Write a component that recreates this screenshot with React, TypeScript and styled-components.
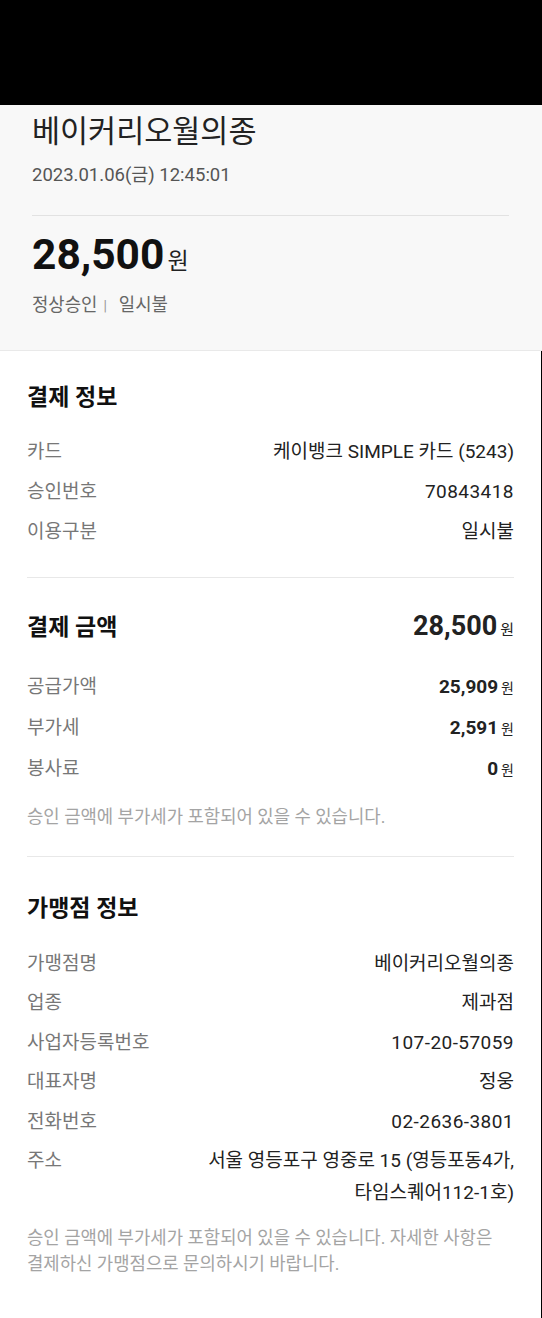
import React from 'react';
import styled, { createGlobalStyle } from 'styled-components';

const GlobalStyle = createGlobalStyle`
  html, body {
    margin: 0;
    padding: 0;
    background: #ffffff;
  }
  body {
    font-family: 'Roboto', 'Noto Sans CJK KR', sans-serif;
    color: #222;
  }
`;

const Page = styled.div`
  width: 542px;
  min-height: 1318px;
  background: #ffffff;
  display: flex;
  flex-direction: column;
`;

const StatusBar = styled.div`
  height: 105px;
  background: #000000;
`;

const Header = styled.header`
  background: #f8f8f8;
  padding: 10px 33px 33px 32px;
  border-bottom: 1px solid #e9e9e9;
  display: flex;
  flex-direction: column;
`;

const StoreName = styled.h1`
  margin: 0;
  font-size: 30.5px;
  line-height: 34px;
  font-weight: 400;
  color: #222;
`;

const DateText = styled.div`
  margin-top: 14px;
  font-size: 18.5px;
  line-height: 24px;
  color: #555;
`;

const HeaderDivider = styled.hr`
  margin: 28px 0 0;
  border: none;
  border-top: 1px solid #e2e2e2;
`;

const BigAmount = styled.div`
  margin-top: 15px;
  height: 48px;
  line-height: 48px;
`;

const BigNumber = styled.span`
  font-size: 42.5px;
  font-weight: 700;
  color: #111;
`;

const Won = styled.span<{ $size: number; $gap?: number }>`
  font-size: ${(p) => p.$size}px;
  line-height: 1;
  font-weight: 400;
  letter-spacing: 0;
  margin-left: ${(p) => p.$gap ?? 3}px;
  color: #222;
`;

const Status = styled.div`
  margin-top: 14px;
  height: 24px;
  font-size: 17.8px;
  line-height: 24px;
  color: #666;
`;

const Bar = styled.span`
  margin: 0 12px 0 6px;
  font-size: 14px;
  line-height: 1;
  color: #999;
`;

const Body = styled.main`
  flex: 1;
  padding: 0 27px;
  border-right: 1px solid #000;
`;

const Section = styled.section<{ $top: number; $bottom: number; $last?: boolean }>`
  padding: ${(p) => p.$top}px 0 ${(p) => p.$bottom}px;
  border-bottom: ${(p) => (p.$last ? 'none' : '1px solid #e8e8e8')};
`;

const TitleRow = styled.div<{ $gap: number }>`
  display: flex;
  justify-content: space-between;
  align-items: center;
  height: 30px;
  margin-bottom: ${(p) => p.$gap}px;
`;

const SectionTitle = styled.h2`
  margin: 0;
  font-size: 23px;
  line-height: 30px;
  font-weight: 700;
  color: #111;
`;

const TotalAmount = styled.div`
  line-height: 30px;
`;

const TotalNumber = styled.span`
  font-size: 27px;
  font-weight: 700;
  color: #222;
`;

const Row = styled.div<{ $pad?: number }>`
  display: flex;
  justify-content: space-between;
  align-items: flex-start;
  padding: ${(p) => p.$pad ?? 4}px 0;
  font-size: 19px;
  line-height: 32px;
`;

const Label = styled.span`
  color: #777;
  white-space: nowrap;
`;

const Value = styled.span<{ $bold?: boolean; $num?: boolean }>`
  color: #222;
  text-align: right;
  font-weight: ${(p) => (p.$bold ? 700 : 400)};
  letter-spacing: ${(p) => (p.$num ? '0.45px' : '0')};
`;

const ValueBlock = styled.span`
  color: #222;
  text-align: right;
`;

const Note = styled.p<{ $top: number }>`
  margin: ${(p) => p.$top}px 0 0;
  font-size: 17.8px;
  line-height: 26px;
  color: #a4a4a4;
`;

const paymentInfo = [
  { label: '카드', value: '케이뱅크 SIMPLE 카드 (5243)', num: false },
  { label: '승인번호', value: '70843418', num: true },
  { label: '이용구분', value: '일시불', num: false },
];

const amounts = [
  { label: '공급가액', value: '25,909' },
  { label: '부가세', value: '2,591' },
  { label: '봉사료', value: '0' },
];

const storeInfo = [
  { label: '가맹점명', value: '베이커리오월의종', num: false },
  { label: '업종', value: '제과점', num: false },
  { label: '사업자등록번호', value: '107-20-57059', num: true },
  { label: '대표자명', value: '정웅', num: false },
  { label: '전화번호', value: '02-2636-3801', num: true },
];

export default function App() {
  return (
    <Page>
      <GlobalStyle />
      <StatusBar />
      <Header>
        <StoreName>베이커리오월의종</StoreName>
        <DateText>2023.01.06(금) 12:45:01</DateText>
        <HeaderDivider />
        <BigAmount>
          <BigNumber>28,500</BigNumber>
          <Won $size={23} $gap={3}>원</Won>
        </BigAmount>
        <Status>
          정상승인<Bar>|</Bar>일시불
        </Status>
      </Header>
      <Body>
        <Section $top={32} $bottom={25}>
          <TitleRow $gap={19}>
            <SectionTitle>결제 정보</SectionTitle>
          </TitleRow>
          {paymentInfo.map((item) => (
            <Row key={item.label}>
              <Label>{item.label}</Label>
              <Value $num={item.num}>{item.value}</Value>
            </Row>
          ))}
        </Section>
        <Section $top={35} $bottom={26}>
          <TitleRow $gap={23}>
            <SectionTitle>결제 금액</SectionTitle>
            <TotalAmount>
              <TotalNumber>28,500</TotalNumber>
              <Won $size={15}>원</Won>
            </TotalAmount>
          </TitleRow>
          {amounts.map((item) => (
            <Row key={item.label} $pad={4.5}>
              <Label>{item.label}</Label>
              <Value $bold>
                {item.value}
                <Won $size={14}>원</Won>
              </Value>
            </Row>
          ))}
          <Note $top={15}>승인 금액에 부가세가 포함되어 있을 수 있습니다.</Note>
        </Section>
        <Section $top={37} $bottom={30} $last>
          <TitleRow $gap={20}>
            <SectionTitle>가맹점 정보</SectionTitle>
          </TitleRow>
          {storeInfo.map((item) => (
            <Row key={item.label} $pad={3.75}>
              <Label>{item.label}</Label>
              <Value $num={item.num}>{item.value}</Value>
            </Row>
          ))}
          <Row $pad={3.75}>
            <Label>주소</Label>
            <ValueBlock>
              서울 영등포구 영중로 15 (영등포동4가,
              <br />
              타임스퀘어112-1호)
            </ValueBlock>
          </Row>
          <Note $top={12}>
            승인 금액에 부가세가 포함되어 있을 수 있습니다. 자세한 사항은
            <br />
            결제하신 가맹점으로 문의하시기 바랍니다.
          </Note>
        </Section>
      </Body>
    </Page>
  );
}
